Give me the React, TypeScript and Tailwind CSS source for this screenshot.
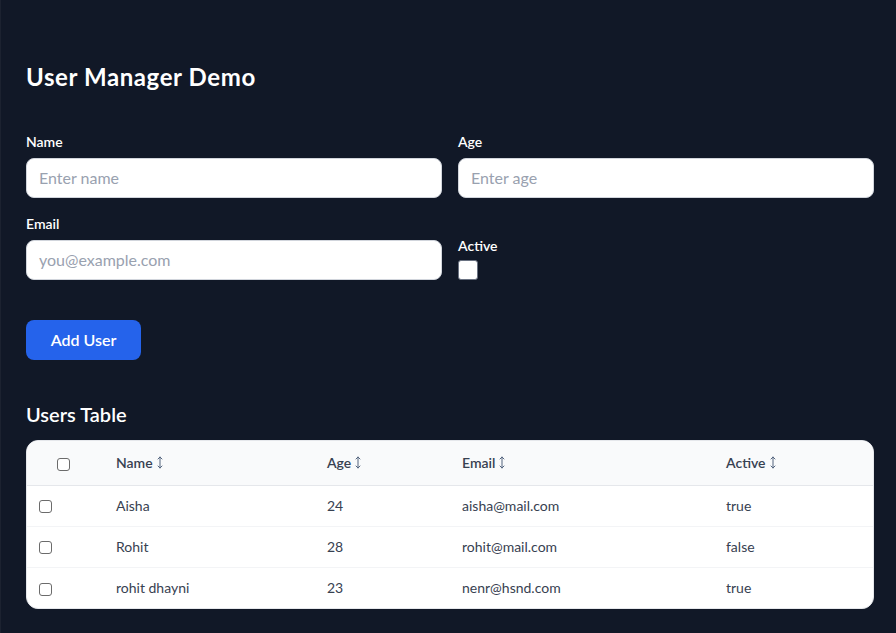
import React from "react";

const font = { fontFamily: '"Segoe UI", Lato, "Noto Sans", sans-serif' };

function Box({ className }: { className: string }) {
  return <span className={"inline-block bg-white border border-[#6b6b6b] " + className} />;
}

const users = [
  { name: "Aisha", age: 24, email: "aisha@mail.com", active: "true" },
  { name: "Rohit", age: 28, email: "rohit@mail.com", active: "false" },
  { name: "rohit dhayni", age: 23, email: "nenr@hsnd.com", active: "true" },
];

function SortIcon() {
  return (
    <svg width="6" height="13" viewBox="0 0 6 13" fill="none" stroke="#55657f" strokeWidth="1" strokeLinecap="round" strokeLinejoin="round">
      <line x1="3" y1="1" x2="3" y2="12" />
      <polyline points="1,3 3,1 5,3" />
      <polyline points="1,10 3,12 5,10" />
    </svg>
  );
}

function SortHead({ label }: { label: string }) {
  return (
    <span className="inline-flex items-center gap-[4px]">
      {label}
      <SortIcon />
    </span>
  );
}

export default function App() {
  return (
    <div className="min-h-[633px] bg-[#111827] border-l border-[#1c2230] pl-[25px] pr-[22px] pt-[61px] pb-6" style={font}>
      <h1 className="text-2xl leading-8 font-bold text-white tracking-[0.6px]">User Manager Demo</h1>

      <div className="mt-[39px] grid grid-cols-2 gap-x-4 gap-y-4 w-[848px] items-end">
        <div className="flex flex-col">
          <label className="text-sm leading-5 font-semibold text-white mb-[6px]">Name</label>
          <div className="h-10 rounded-lg bg-white border border-gray-300 px-3 flex items-center text-base text-gray-400">Enter name</div>
        </div>
        <div className="flex flex-col">
          <label className="text-sm leading-5 font-semibold text-white mb-[6px]">Age</label>
          <div className="h-10 rounded-lg bg-white border border-gray-300 px-3 flex items-center text-base text-gray-400">Enter age</div>
        </div>
        <div className="flex flex-col">
          <label className="text-sm leading-5 font-semibold text-white mb-[6px]">Email</label>
          <div className="h-10 rounded-lg bg-white border border-gray-300 px-3 flex items-center text-base text-gray-400">you@example.com</div>
        </div>
        <div className="flex flex-col">
          <label className="text-sm leading-5 font-semibold text-white mb-1">Active</label>
          <Box className="w-5 h-5 rounded-[3px] border-gray-500" />
        </div>
      </div>

      <button className="mt-10 h-10 w-[115px] rounded-lg bg-[#2563eb] text-white text-base font-semibold">Add User</button>

      <h2 className="mt-10 text-xl leading-7 font-semibold text-white">Users Table</h2>

      <div className="mt-3 w-[848px] rounded-xl bg-white overflow-hidden border border-gray-200">
        <table className="w-full table-fixed text-sm text-[#374151] border-collapse">
          <colgroup>
            <col className="w-[89px]" />
            <col className="w-[211px]" />
            <col className="w-[135px]" />
            <col className="w-[264px]" />
            <col />
          </colgroup>
          <thead>
            <tr className="bg-[#f9fafb] h-[44px] border-b border-gray-200">
              <th className="pl-[30px] text-left align-middle">
                <Box className="w-[13px] h-[13px] rounded-[3px] align-middle" />
              </th>
              <th className="text-left font-semibold"><SortHead label="Name" /></th>
              <th className="text-left font-semibold"><SortHead label="Age" /></th>
              <th className="text-left font-semibold"><SortHead label="Email" /></th>
              <th className="text-left font-semibold"><SortHead label="Active" /></th>
            </tr>
          </thead>
          <tbody>
            {users.map((u, i) => (
              <tr key={i} className={"h-[41px] " + (i < users.length - 1 ? "border-b border-gray-100" : "")}>
                <td className="pl-[12px] align-middle">
                  <Box className="w-[13px] h-[13px] rounded-[3px] align-middle" />
                </td>
                <td>{u.name}</td>
                <td>{u.age}</td>
                <td>{u.email}</td>
                <td>{u.active}</td>
              </tr>
            ))}
          </tbody>
        </table>
      </div>
    </div>
  );
}
